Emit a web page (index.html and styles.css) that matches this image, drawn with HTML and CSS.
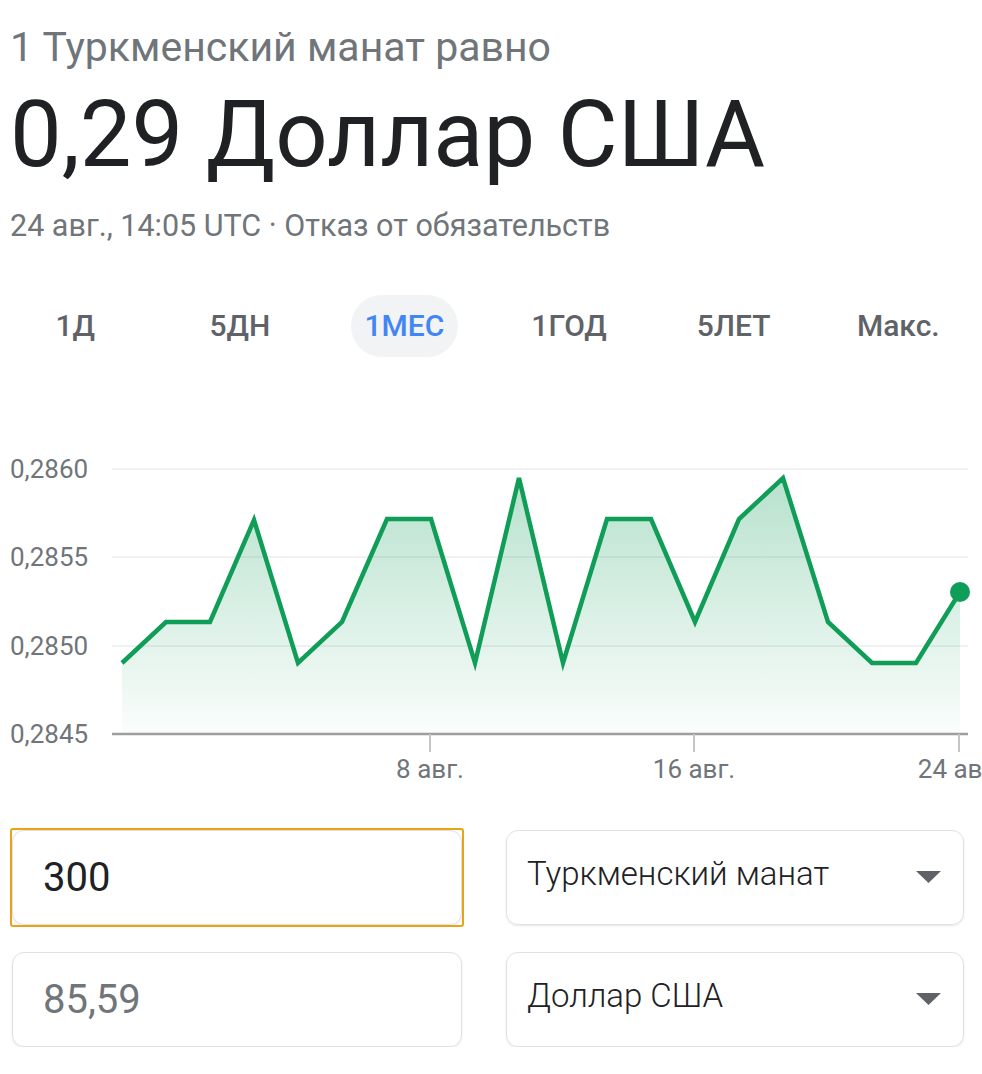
FILE: index.html
```html
<!DOCTYPE html>
<html lang="ru">
<head>
    <meta charset="UTF-8">
    <meta name="viewport" content="width=device-width, initial-scale=1.0">
    <title>Туркменский манат в Доллар США</title>
    <link rel="stylesheet" href="styles.css">
</head>
<body>
    <div class="page">
        <div class="rate-label">1 Туркменский манат равно</div>
        <div class="rate-value">0,29 Доллар США</div>
        <div class="rate-meta">24 авг., 14:05 UTC · <span class="disclaimer">Отказ от обязательств</span></div>

        <div class="tabs">
            <div class="tab">1Д</div>
            <div class="tab">5ДН</div>
            <div class="tab active">1МЕС</div>
            <div class="tab">1ГОД</div>
            <div class="tab">5ЛЕТ</div>
            <div class="tab">Макс.</div>
        </div>

        <div class="chart">
            <svg width="982" height="360" viewBox="0 0 982 360">
                <defs>
                    <linearGradient id="area" x1="0" y1="0" x2="0" y2="1">
                        <stop offset="0" stop-color="#0f9d58" stop-opacity="0.3"/>
                        <stop offset="1" stop-color="#0f9d58" stop-opacity="0.02"/>
                    </linearGradient>
                </defs>
                <!-- grid -->
                <line class="grid" x1="112" y1="29" x2="968" y2="29"/>
                <line class="grid" x1="112" y1="117" x2="968" y2="117"/>
                <line class="grid" x1="112" y1="206" x2="968" y2="206"/>
                <text class="axis-label" x="10" y="38">0,2860</text>
                <text class="axis-label" x="10" y="126">0,2855</text>
                <text class="axis-label" x="10" y="215">0,2850</text>
                <text class="axis-label" x="10" y="303">0,2845</text>

                <polygon fill="url(#area)" points="122,294 122,223 166,182 210,182 254,80 298,223 342,182 387,79 431,79 475,223 519,38 563,223 607,79 651,79 695,182 739,79 783,38 828,182 872,223 916,223 960,152 960,294"/>

                <line class="axis" x1="112" y1="294" x2="968" y2="294"/>
                <line class="tick" x1="430" y1="294" x2="430" y2="312"/>
                <line class="tick" x1="694" y1="294" x2="694" y2="312"/>
                <line class="tick" x1="959" y1="294" x2="959" y2="312"/>
                <text class="axis-label" x="430" y="338" text-anchor="middle">8 авг.</text>
                <text class="axis-label" x="694" y="338" text-anchor="middle">16 авг.</text>
                <text class="axis-label" x="959" y="338" text-anchor="middle">24 авг.</text>

                <polyline class="line" points="122,223 166,182 210,182 254,80 298,223 342,182 387,79 431,79 475,223 519,38 563,223 607,79 651,79 695,182 739,79 783,38 828,182 872,223 916,223 960,152"/>
                <circle cx="960" cy="152" r="10" fill="#0f9d58"/>
            </svg>
        </div>

        <div class="converter">
            <div class="field focused">300</div>
            <div class="select">
                <span>Туркменский манат</span>
                <svg class="caret" width="25" height="12" viewBox="0 0 25 12"><polygon points="0,0 25,0 12.5,12"/></svg>
            </div>
            <div class="field result">85,59</div>
            <div class="select">
                <span>Доллар США</span>
                <svg class="caret" width="25" height="12" viewBox="0 0 25 12"><polygon points="0,0 25,0 12.5,12"/></svg>
            </div>
        </div>
    </div>
</body>
</html>
```

FILE: styles.css
```css
body {
    margin: 0;
    font-family: Roboto, "Noto Sans", Arial, sans-serif;
    background: #fff;
    overflow: hidden;
}
.page {
    padding: 23px 10px 0;
}
.rate-label {
    font-size: 41px;
    line-height: 48px;
    color: #70757a;
}
.rate-value {
    margin-top: 17px;
    font-size: 92px;
    line-height: 93px;
    color: #202124;
}
.rate-meta {
    margin-top: 28px;
    font-size: 30.5px;
    line-height: 34px;
    color: #70757a;
}
.tabs {
    display: grid;
    grid-template-columns: repeat(6, 164.6px);
    justify-items: center;
    margin: 52px 0 0 -17px;
}
.tab {
    height: 62px;
    line-height: 62px;
    padding: 0 14px;
    border-radius: 31px;
    font-size: 30px;
    font-weight: 500;
    color: #5f6368;
}
.tab.active {
    background: #f1f3f4;
    color: #4285f4;
}
.chart {
    margin: 83px 0 0 -10px;
    height: 360px;
}
.chart svg {
    display: block;
    overflow: hidden;
}
.grid {
    stroke: #f1f1f1;
    stroke-width: 2;
}
.axis {
    stroke: #9e9e9e;
    stroke-width: 2.5;
}
.tick {
    stroke: #c4c4c4;
    stroke-width: 2;
}
.axis-label {
    font-family: Roboto, Arial, sans-serif;
    font-size: 26px;
    fill: #70757a;
}
.line {
    fill: none;
    stroke: #0f9d58;
    stroke-width: 4.5;
    stroke-linejoin: miter;
}
.converter {
    display: grid;
    grid-template-columns: 450px 458px;
    grid-auto-rows: 95px;
    column-gap: 44px;
    row-gap: 27px;
    margin: 30px 0 0 2px;
}
.field,
.select {
    position: relative;
    display: flex;
    align-items: center;
    border: 1.5px solid #dfe1e5;
    border-radius: 12px;
    box-shadow: 0 1px 2px rgba(60, 64, 67, 0.12);
    box-sizing: border-box;
}
.field {
    padding-left: 30px;
    font-size: 40px;
    color: #202124;
}
.field.result {
    color: #70757a;
}
.field.focused::after {
    content: "";
    position: absolute;
    inset: -3px;
    border: 2px solid #e8a317;
    border-radius: 3px;
}
.select {
    justify-content: space-between;
    padding: 0 22px 8px 20px;
    font-size: 33px;
    font-weight: 300;
    color: #202124;
}
.caret {
    fill: #5f6368;
    margin-top: 6px;
}
```
